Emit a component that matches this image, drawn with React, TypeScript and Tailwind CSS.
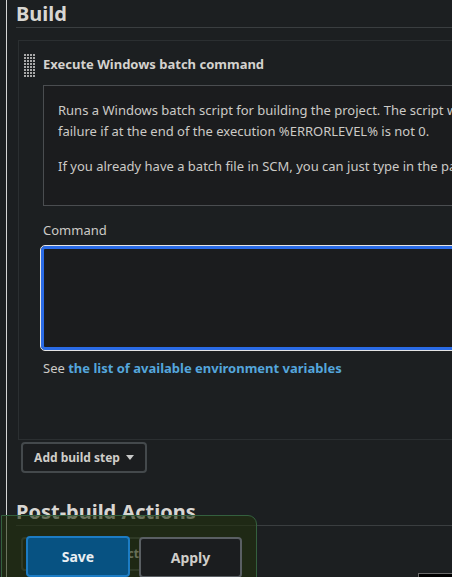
import React from "react";

function DragHandle() {
  const dots = [];
  for (let r = 0; r < 8; r++) {
    for (let c = 0; c < 4; c++) {
      dots.push(<rect key={`${r}-${c}`} x={c * 3} y={r * 3} width="2" height="2" fill="#a9a9a9" />);
    }
  }
  return (
    <svg width="12" height="24" viewBox="0 0 12 24" className="shrink-0">
      {dots}
    </svg>
  );
}

function Caret() {
  return (
    <svg width="8" height="5" viewBox="0 0 8 5" className="ml-[6px]">
      <path d="M0 0 L8 0 L4 5 Z" fill="#c9c9c9" />
    </svg>
  );
}

export default function App() {
  return (
    <div className="relative w-[452px] h-[577px] overflow-hidden bg-[#1c1f21] text-[#cccac6] font-['Noto_Sans',sans-serif]">
      <div className="ml-[6px] h-full border-l border-[#d6d6d6] pl-[9px]">
        <h2 className="w-[700px] border-b border-[#3a3e40] text-[20px] font-bold leading-[27px] text-[#d8d6d2]">
          Build
        </h2>

        <div className="ml-[2px] mt-[12px] w-[700px] border border-[#2b2f31] pt-[13px] pb-[61px]">
          <div className="flex">
            <div className="ml-[5px] mr-[7px]">
              <DragHandle />
            </div>
            <div className="flex-1">
              <div className="text-[13px] font-bold leading-[20px] text-[#d4d2ce]">
                Execute Windows batch command
              </div>

              <div className="mt-[11px] border border-[#4a4d50] bg-[#1b1c1e] pl-[14px] pt-[14px] pb-[28px] text-[13px] leading-[21px] whitespace-nowrap">
                <p>
                  Runs a Windows batch script for building the project. The script will be executed with the workspace as the current directory.
                  <br />
                  failure if at the end of the execution %ERRORLEVEL% is not 0.
                </p>
                <p className="mt-[14px]">
                  If you already have a batch file in SCM, you can just type in the path of that batch file.
                </p>
              </div>

              <div className="mt-[14px] text-[13px] leading-[20px]">Command</div>
              <textarea
                className="mt-[6px] -ml-[2px] block h-[104px] w-[600px] resize-none rounded-[4px] border-[3px] border-[#2a6be6] bg-[#1b1c1e] outline outline-1 outline-[#e4e4e4]"
                defaultValue=""
              />

              <div className="mt-[8px] text-[13px] leading-[20px]">
                See <span className="font-bold text-[#54a6dc]">the list of available environment variables</span>
              </div>
            </div>
          </div>
        </div>

        <button className="ml-[5px] mt-[2px] flex h-[31px] w-[126px] items-center justify-center rounded-[4px] border-2 border-[#44494c] bg-[#1b1d1f] text-[12px] font-bold text-[#cfcdc9]">
          Add build step
          <Caret />
        </button>

        <h2 className="mt-[25px] w-[700px] border-b border-[#3a3e40] text-[20px] font-bold leading-[27px] text-[#d8d6d2]">
          Post-build Actions
        </h2>

        <button className="ml-[5px] mt-[11px] flex h-[34px] w-[160px] items-center justify-center rounded-[4px] border-2 border-[#44494c] bg-[#1b1d1f] text-[12px] font-bold text-[#cfcdc9]">
          Add post-build action
          <Caret />
        </button>
      </div>

      <div className="absolute left-[1px] top-[515px] flex h-[80px] w-[256px] gap-[9px] rounded-tr-[9px] border border-[#34603e] bg-[rgba(34,48,14,0.6)] pl-[24px] pt-[20px]">
        <button className="h-[41px] w-[104px] rounded-[4px] border-2 border-[#1c7cc4] bg-[#075282] text-[14px] font-bold text-[#e8eef2]">
          Save
        </button>
        <button className="mt-[1px] h-[41px] w-[103px] rounded-[4px] border-2 border-[#5a5f63] bg-[#1b1d1f] text-[14px] font-bold text-[#cfcdc9]">
          Apply
        </button>
      </div>

      <div className="absolute left-[418px] top-[573px] h-[10px] w-[40px] border-l border-t border-[#6a6a6a] bg-black" />
    </div>
  );
}
